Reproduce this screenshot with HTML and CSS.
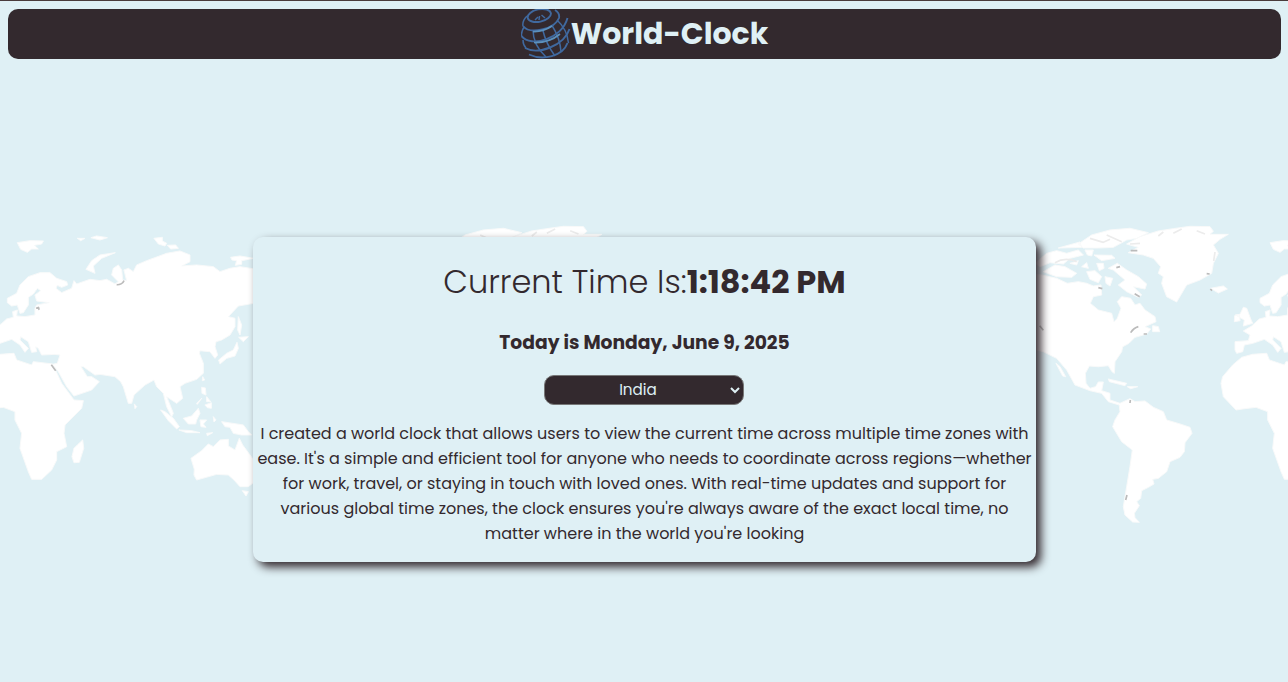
FILE: index.html
```html
<!DOCTYPE html>
<html lang="en">
<head>
<meta charset="utf-8">
<title>World-Clock</title>
<link rel="stylesheet" href="styles.css">
</head>
<body>
<svg class="map" viewBox="0 0 1288 682" aria-hidden="true">
  <defs>
    <g id="old-world" transform="translate(0 220) scale(.33333)">
      <path d="M-53 365L-13 362-8 345-28 333-3 318 20 297 40 292 38 275 52 270 50 288 75 290 105 285 105 265 110 255 148 248 110 243 105 225 122 212 112 205 100 222 85 232 85 255 70 278 60 280 52 255 35 258 22 248 22 235 50 220 60 195 85 170 120 158 150 158 170 175 200 185 203 195 185 202 172 196 168 205 185 218 215 205 222 182 230 192 270 178 300 182 320 178 345 192 355 185 335 165 340 145 355 135 365 150 368 180 380 182 372 150 385 145 400 155 410 135 440 122 500 100 540 93 570 105 570 125 545 138 590 135 640 140 660 155 690 145 720 140 770 148 830 160 820 190 760 250 715 258 685 290 705 295 705 320 690 345 665 360 648 365 645 380 653 405 645 415 630 395 600 392 598 400 610 430 610 460 590 478 555 490 540 500 548 535 530 550 515 540 500 530 520 580 515 590 500 560 490 520 470 500 462 480 435 495 402 525 395 550 385 550 370 500 362 485 345 470 300 463 285 465 250 440 243 440 262 470 275 470 298 485 275 510 222 528 200 500 175 455 158 433 172 430 180 405 165 403 125 405 115 385 107 380 110 395 95 397 85 365 62 350 60 360 85 385 75 397 60 375 35 358 0 370-25 375-30 395-48 400-53 390Z"/>
      <path d="M-33 412L0 403 42 400 50 420 95 435 100 425 158 432 185 490 222 540 250 542 245 565 195 615 192 640 200 680 170 695 170 720 155 750 125 778 95 778 85 755 60 685 65 640 45 600 45 575 10 562-25 566-50 570-88 530-95 490-90 470-60 435Z"/>
      <path d="M52 68L90 62 130 63 125 72 103 76 115 87 95 87 82 97 62 88ZM232 55L255 55 242 62ZM273 53L290 48 322 53 300 60ZM258 148L275 122 300 105 346 98 305 115 280 138 285 160ZM462 55L487 52 487 63 500 70 495 78 475 72ZM502 76L527 75 535 85 512 87ZM692 112L720 108 760 115 725 122 725 133 706 136 710 122 696 120ZM-52 285L-38 283-28 262-18 265-5 300 0 310-28 318-25 300ZM-54 287L-40 285-38 302-55 305Z"/>
      <path d="M715 290L725 315 720 345 713 330ZM716 352L745 350 730 365ZM711 367L715 385 705 408 680 415 660 432 656 420 680 400 700 390ZM608 470L614 480 607 482ZM605 502L616 504 618 525 606 520ZM590 550L605 535 592 553ZM620 530L632 545 620 545ZM615 555L634 548 634 565 622 563ZM550 595L575 588 595 565 600 580 590 600 587 612 565 612ZM482 570L495 575 520 595 538 620 530 627 505 602ZM537 630L575 632 600 638 560 638ZM600 600L620 600 610 612 618 622 603 620ZM640 590L648 600 642 606ZM665 605L730 615 745 635 755 645 725 645 700 640 690 622 675 620ZM620 640L638 638 622 647ZM403 552L410 560 405 566ZM232 675L248 660 251 685 238 727 222 728 216 710 222 685Z"/>
      <path d="M573 715L605 692 625 672 640 680 660 660 685 658 685 678 705 690 718 655 728 675 750 705 775 740 770 780 745 800 720 800 702 780 685 765 650 763 590 780 582 765 583 748ZM727 812L745 815 738 828Z"/>
      <path class="map__mark" d="M350 194C359 195 369 190 372 182M108 264L119 265M114 260L117 270M154 434L167 452"/>
    </g>
    <g id="new-world" transform="translate(1030 220) scale(.33333)">
      <path d="M-80 158L35 165 80 175 112 190 145 185 170 190 190 198 213 195 215 225 190 230 181 250 205 270 245 280 252 306 262 295 273 265 262 245 275 230 302 235 315 255 330 250 345 270 375 290 378 305 345 320 362 327 350 342 315 352 297 370 278 380 275 395 255 425 253 460 246 455 235 437 205 440 178 438 166 460 168 490 180 505 197 500 205 486 220 486 215 512 240 520 240 540 270 550 300 536 315 545 345 543 370 562 400 575 410 600 450 612 480 622 486 640 465 668 463 695 450 712 420 725 410 755 385 775 368 778 372 792 355 802 335 812 332 835 320 845 328 857 313 880 315 893 328 907 308 906 285 885 280 860 290 800 300 740 307 690 275 665 248 620 255 600 270 575 268 555 235 545 215 520 180 512 135 495 110 450 80 415 40 395-60 370Z"/>
      <path d="M290 72L330 50 385 33 430 26 480 19 540 20 550 34 540 43 595 43 570 58 550 75 565 100 550 130 545 160 510 180 470 195 440 246 410 230 395 190 400 170 385 160 392 140 370 115 340 105 295 98 325 82ZM145 72L185 45 240 30 300 25 355 38 320 55 290 60 250 82 205 84 160 84ZM262 130L290 150 325 170 350 192 345 207 310 200 335 225 325 232 290 215 265 195 285 180 250 150 235 145ZM40 155L75 135 105 140 140 160 125 172 80 170ZM15 130L50 100 80 92 110 100 145 90 160 105 120 115 100 132 60 128 30 140ZM85 84L150 66 155 82ZM192 105L245 106 255 115 215 122ZM155 140L170 128 175 145ZM170 155L195 152 215 170 205 188 180 178ZM200 130L220 130 222 145 208 152ZM120 130L145 122 140 135ZM165 90L190 90 185 108 172 105ZM225 170L248 175 240 198 228 190ZM542 205L580 198 592 207 565 219ZM368 317L385 320 389 335 368 335ZM78 430L90 440 107 470 98 468ZM235 477L290 490 285 497 238 485ZM292 500L323 500 302 506Z"/>
      <path class="map__shade" d="M75 128Q105 110 140 125M180 55L220 67 240 58M230 45L275 65M300 72L330 70M400 36L385 48M455 27L430 40M500 32L525 42M555 96L551 123"/>
      <path class="map__mark" d="M302 92L322 92M259 143L270 140M530 161L539 162M541 207L546 212M314 221L329 230M205 203L217 206M302 338Q311 324 325 320M341 342L351 342M29 317L40 331M301 540L300 549M291 825L287 840"/>
    </g>
  </defs>
  <use href="#old-world"/>
  <use href="#new-world" x="-626.5"/>
  <use href="#new-world"/>
  <use href="#old-world" x="1252.7"/>
</svg>
<header class="header">
  <svg class="logo" viewBox="0 0 50 50" aria-hidden="true">
    <g class="logo__grid">
      <ellipse cx="18.3" cy="6.5" rx="11.8" ry="6.2" transform="rotate(-12 18.3 6.5)"/>
      <path d="M2 17C9 26 34 20 38 9Q39 4 34 1M.5 27C10 39 41 30 46.500 9M4 39C17 46 43 37 48.500 20M8 45.500C22 52 42 47 46.500 34"/>
      <path class="logo__meridian" d="M12 21Q12 36 25 48M21.500 20Q25 35 34 47M31 16.500Q39 29 40 42.500M36 11Q46 20 47.500 34M6 7Q1 12 2 17M3 18Q0 23 .5 27M2 31Q2 36 5 39M14 11L17 8M18 11L18.500 7M24 9L20.500 6"/>
    </g>
    <path class="logo__shine" d="M12 22.500Q22 23 31 17M13 33.500Q28 34 39 25"/>
  </svg>
  <h1 class="header__title">World-Clock</h1>
</header>
<main class="card">
  <p class="time"><span class="time__label">Current Time Is:</span><b>1:18:42 PM</b></p>
  <h3 class="date">Today is Monday, June 9, 2025</h3>
  <select class="zone"><option>India</option></select>
  <p class="about">I created a world clock that allows users to view the current time across multiple time zones with ease. It's a simple and efficient tool for anyone who needs to coordinate across regions—whether for work, travel, or staying in touch with loved ones. With real-time updates and support for various global time zones, the clock ensures you're always aware of the exact local time, no matter where in the world you're looking</p>
</main>
</body>
</html>
```
FILE: styles.css
```css
* { box-sizing: border-box; }
body {
  margin: 0;
  height: 682px;
  padding: 8px 7px 0 8px;
  border-top: 1px solid #493b3c;
  background: #dff0f5;
  color: #33292e;
  font-family: Poppins, Inter, sans-serif;
  overflow: hidden;
}
.map {
  position: absolute;
  inset: 0;
  z-index: -1;
  width: 1288px;
  height: 682px;
  fill: #fff;
  stroke: #f9fafa;
  stroke-width: 3;
  stroke-linejoin: round;
}
.map__mark { fill: none; stroke: #bbb; stroke-width: 5; }
.map__shade { fill: none; stroke: #ececec; stroke-width: 5; }
.header {
  display: flex;
  align-items: center;
  justify-content: center;
  height: 50px;
  border-radius: 10px;
  background: #33292e;
  color: #dff0f5;
}
.logo { width: 50px; height: 50px; overflow: hidden; fill: none; }
.logo__grid { stroke: #40699f; stroke-width: 1.9; }
.logo__meridian { stroke-width: 1.5; }
.logo__shine { stroke: #5c91bd; stroke-width: 1.7; }
.header__title { margin: 0; font-size: 30px; line-height: 50px; }
.card {
  width: 783px;
  height: 325px;
  margin: 178px 0 0 245px;
  padding: 20px 4px 0;
  border-radius: 10px;
  background: #dff0f5;
  box-shadow: 5px 5px 10px #33292e;
  text-align: center;
}
.time { margin: 0; font-size: 32px; line-height: 50px; }
.time__label { font-weight: 300; }
.date { margin: 22px 0 0; font-size: 18.72px; line-height: 28px; }
.zone {
  display: block;
  width: 200px;
  height: 30px;
  margin: 18px auto 0 287px;
  padding-bottom: 1px;
  border: 1px solid #777;
  border-radius: 10px;
  background: #33292e;
  color: #dff0f5;
  font: 15.2px Poppins, Inter, sans-serif;
  text-align: center;
}
.about { margin: 16px 0 0; font-size: 16px; line-height: 25px; }
```
